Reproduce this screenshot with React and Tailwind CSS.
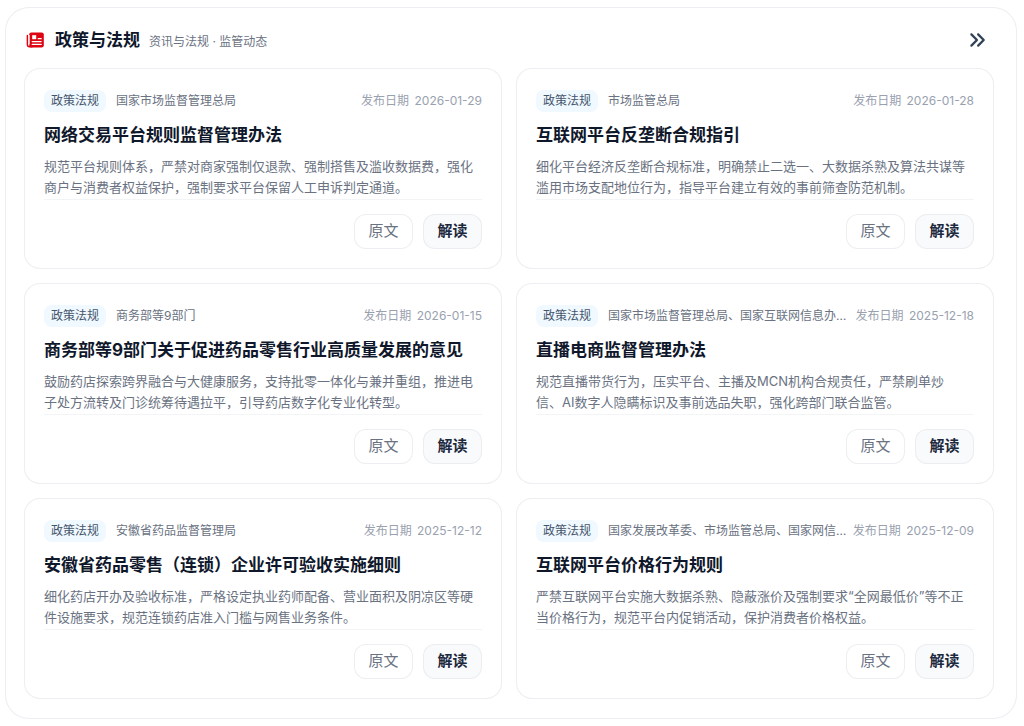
import React from "react";
import { FaAnglesRight } from "react-icons/fa6";

const policies = [
	{
		org: "国家市场监督管理总局",
		date: "2026-01-29",
		title: "网络交易平台规则监督管理办法",
		summary:
			"规范平台规则体系，严禁对商家强制仅退款、强制搭售及滥收数据费，强化商户与消费者权益保护，强制要求平台保留人工申诉判定通道。",
	},
	{
		org: "市场监管总局",
		date: "2026-01-28",
		title: "互联网平台反垄断合规指引",
		summary:
			"细化平台经济反垄断合规标准，明确禁止二选一、大数据杀熟及算法共谋等滥用市场支配地位行为，指导平台建立有效的事前筛查防范机制。",
	},
	{
		org: "商务部等9部门",
		date: "2026-01-15",
		title: "商务部等9部门关于促进药品零售行业高质量发展的意见",
		summary:
			"鼓励药店探索跨界融合与大健康服务，支持批零一体化与兼并重组，推进电子处方流转及门诊统筹待遇拉平，引导药店数字化专业化转型。",
	},
	{
		org: "国家市场监督管理总局、国家互联网信息办公室",
		date: "2025-12-18",
		title: "直播电商监督管理办法",
		summary:
			"规范直播带货行为，压实平台、主播及MCN机构合规责任，严禁刷单炒信、AI数字人隐瞒标识及事前选品失职，强化跨部门联合监管。",
	},
	{
		org: "安徽省药品监督管理局",
		date: "2025-12-12",
		title: "安徽省药品零售（连锁）企业许可验收实施细则",
		summary:
			"细化药店开办及验收标准，严格设定执业药师配备、营业面积及阴凉区等硬件设施要求，规范连锁药店准入门槛与网售业务条件。",
	},
	{
		org: "国家发展改革委、市场监管总局、国家网信办",
		date: "2025-12-09",
		title: "互联网平台价格行为规则",
		summary:
			"严禁互联网平台实施大数据杀熟、隐蔽涨价及强制要求“全网最低价”等不正当价格行为，规范平台内促销活动，保护消费者价格权益。",
	},
];

const NewsIcon = () => (
	<svg
		viewBox="0 0 18 18"
		className="size-[18px] shrink-0 text-[#dc0511]"
		fill="none"
		aria-hidden="true">
		<path
			d="M1.400 4.500V13.800a1.900 1.900 0 0 0 1.900 1.900H6"
			stroke="currentColor"
			strokeWidth="1.500"
			strokeLinecap="round"
		/>
		<rect x="3.200" y="1.400" width="14.600" height="15" rx="2.200" fill="currentColor" />
		<path d="M3.200 4v9.500" stroke="#fff" strokeWidth="0.900" />
		<rect x="6.200" y="4.200" width="4" height="4" fill="#fff" />
		<path
			d="M12.200 7.700h3M6.200 10.600h9M6.200 13.400h9"
			stroke="#fff"
			strokeWidth="1.200"
			strokeLinecap="round"
		/>
	</svg>
);

const PolicyCard = ({ policy }) => (
	<article className="flex flex-col min-w-0 rounded-2xl border border-gray-200/70 bg-white px-[19px] pt-[21px] pb-[19px]">
		<div className="flex items-center text-[12px] leading-[22px]">
			<span className="shrink-0 rounded-lg bg-sky-50 px-[7px] text-slate-600">
				政策法规
			</span>
			<span className="ml-2.5 min-w-0 grow truncate text-gray-500">
				{policy.org}
			</span>
			<span className="ml-1.5 shrink-0 text-gray-400">
				发布日期{" "}
				<time className="ml-0.5" dateTime={policy.date}>
					{policy.date}
				</time>
			</span>
		</div>
		<h3 className="mt-[11px] truncate text-[17px] leading-6 font-bold text-slate-900">
			{policy.title}
		</h3>
		<p className="mt-[9px] line-clamp-2 pr-2 text-[13px] leading-[21px] text-gray-500">
			{policy.summary}
		</p>
		<div className="mt-px flex justify-end gap-2.5 border-t border-gray-100 pt-3.5 text-[15px]">
			<button className="h-[35px] w-[59px] rounded-xl border border-gray-200/70 bg-white text-gray-500">
				原文
			</button>
			<button className="h-[35px] w-[59px] rounded-xl border border-gray-200/70 bg-slate-50 font-bold text-slate-800">
				解读
			</button>
		</div>
	</article>
);

const App = () => {
	return (
		<main className="bg-white pl-[5px] pr-[7px] py-[7px] font-['Inter','Noto_Sans_CJK_SC',sans-serif]">
			<section className="rounded-3xl border border-gray-200/70 bg-white pl-[18px] pr-[22px] pt-5 pb-[19px]">
				<header className="flex items-center pl-0.5 pb-4">
					<NewsIcon />
					<h2 className="ml-[11px] text-[17px] leading-6 font-bold text-slate-900">
						政策与法规
					</h2>
					<p className="ml-[9px] pt-1 text-[12px] leading-5 text-gray-500">
						资讯与法规 · 监管动态
					</p>
					<button aria-label="更多" className="ml-auto mr-2">
						<FaAnglesRight className="size-[18px] text-slate-700" />
					</button>
				</header>
				<div className="grid grid-cols-2 gap-3.5">
					{policies.map((policy) => (
						<PolicyCard key={policy.title} policy={policy} />
					))}
				</div>
			</section>
		</main>
	);
};

export default App;
